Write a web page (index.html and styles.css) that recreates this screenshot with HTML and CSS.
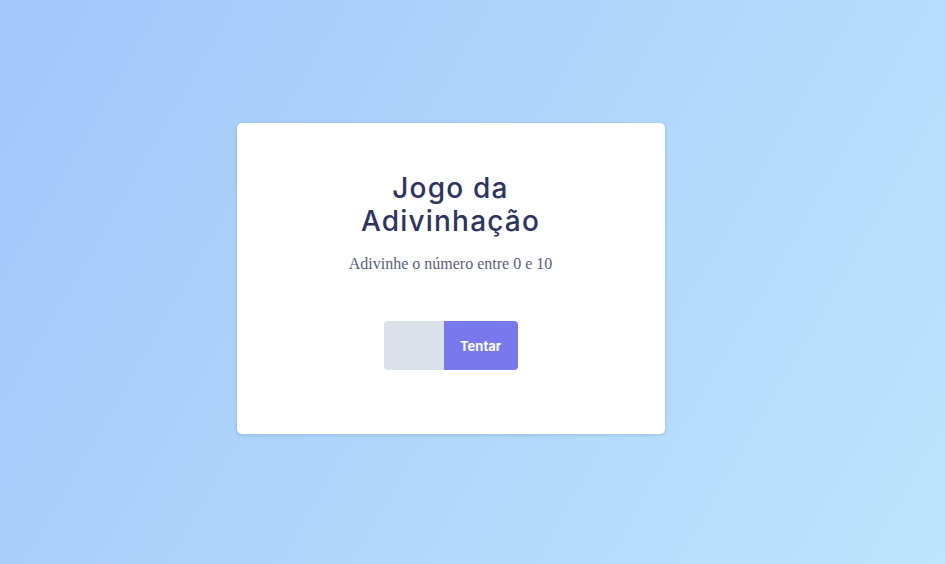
FILE: index.html
```html
<!DOCTYPE html>
<html lang="pt">
<head>
<meta charset="utf-8">
<title>Jogo da Adivinhação</title>
<link rel="stylesheet" href="styles.css">
</head>
<body>
<main class="page">
  <section class="card">
    <h1 class="title">Jogo da Adivinhação</h1>
    <p class="subtitle">Adivinhe o número entre 0 e 10</p>
    <form class="guess">
      <input class="guess-input" type="number" aria-label="Palpite">
      <button class="guess-btn" type="button">Tentar</button>
    </form>
  </section>
</main>
</body>
</html>
```

FILE: styles.css
```css
html, body {
  margin: 0;
  height: 100%;
}
body {
  background: linear-gradient(120deg, #a3c6fb 0%, #bde5fc 100%);
  font-family: "Liberation Serif", serif;
}
.page {
  min-height: 100%;
  display: flex;
  justify-content: center;
  align-items: flex-start;
  padding-top: 123px;
  box-sizing: border-box;
}
.card {
  width: 428px;
  box-sizing: border-box;
  margin-right: 44px;
  background: #fff;
  border-radius: 5px;
  box-shadow: 0 1px 4px rgba(40, 70, 130, 0.18);
  padding: 49px 0 64px;
  display: flex;
  flex-direction: column;
  align-items: center;
  text-align: center;
}
.title {
  margin: 0;
  width: 210px;
  font-family: Inter, "DejaVu Sans", sans-serif;
  font-weight: 500;
  font-size: 28px;
  line-height: 33px;
  letter-spacing: 1.2px;
  color: #2e3360;
}
.subtitle {
  margin: 17px 0 0;
  font-family: "Liberation Serif", serif;
  font-size: 16px;
  line-height: 18px;
  color: #5a5e80;
}
.guess {
  margin-top: 48px;
  display: flex;
}
.guess-input {
  width: 60px;
  height: 49px;
  box-sizing: border-box;
  border: none;
  margin: 0;
  padding: 0 8px;
  background: #dbe1e9;
  border-radius: 4px 0 0 4px;
  outline: none;
  -moz-appearance: textfield;
}
.guess-input::-webkit-outer-spin-button,
.guess-input::-webkit-inner-spin-button {
  -webkit-appearance: none;
  margin: 0;
}
.guess-btn {
  width: 74px;
  height: 49px;
  border: none;
  margin: 0;
  padding: 0;
  background: #7879ed;
  color: #fff;
  font-family: Inter, "DejaVu Sans", sans-serif;
  font-weight: 700;
  font-size: 13px;
  border-radius: 0 4px 4px 0;
  cursor: pointer;
}
```
